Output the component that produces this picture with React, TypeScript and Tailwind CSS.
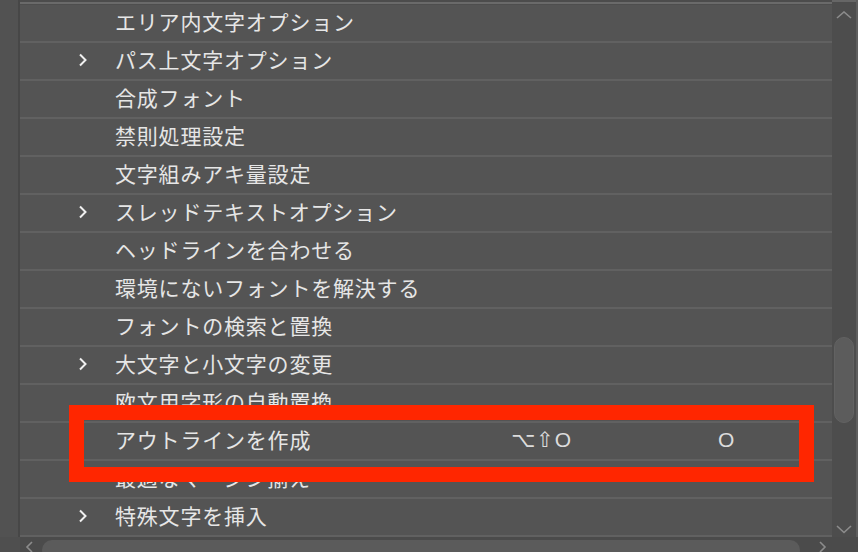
import React from "react";

type Row = { label: string; sub?: boolean; shortcut?: string; accel?: string };

const rows: Row[] = [
  { label: "エリア内文字オプション" },
  { label: "パス上文字オプション", sub: true },
  { label: "合成フォント" },
  { label: "禁則処理設定" },
  { label: "文字組みアキ量設定" },
  { label: "スレッドテキストオプション", sub: true },
  { label: "ヘッドラインを合わせる" },
  { label: "環境にないフォントを解決する" },
  { label: "フォントの検索と置換" },
  { label: "大文字と小文字の変更", sub: true },
  { label: "欧文用字形の自動置換" },
  { label: "アウトラインを作成", shortcut: "⌥⇧O", accel: "O" },
  { label: "最適なマージン揃え" },
  { label: "特殊文字を挿入", sub: true },
];

const Chevron = () => (
  <svg width="10" height="14" viewBox="0 0 10 14" fill="none">
    <path d="M2 1.5 L7.5 7 L2 12.5" stroke="#f0f0f0" strokeWidth="2" />
  </svg>
);

const MenuRow = ({ label, sub, shortcut, accel }: Row) => (
  <div className="h-[38px] shrink-0 flex items-center pl-[58px] pb-[2px] border-b-2 border-[#616161] bg-[#545454]">
    <div className="w-[37px] flex items-center">{sub && <Chevron />}</div>
    <div className="w-[396px] text-[21px] tracking-[0.8px] text-[#e6e6e6] whitespace-nowrap">{label}</div>
    {shortcut && (
      <>
        <div className="w-[207px] text-[21px] tracking-[1px] text-[#dcdcdc] whitespace-nowrap font-['Liberation_Sans','DejaVu_Sans',sans-serif]">
          {shortcut}
        </div>
        <div className="text-[21px] text-[#dcdcdc] font-['Liberation_Sans',sans-serif]">{accel}</div>
      </>
    )}
  </div>
);

export default function App() {
  return (
    <div className="relative w-[858px] h-[552px] overflow-hidden bg-[#535353] flex flex-col font-['Noto_Sans_CJK_JP','Noto_Sans',sans-serif]">
      <div className="flex flex-1 min-h-0">
        <div className="w-[18px] bg-[#525252]" />
        <div className="w-[2px] bg-[#474747]" />
        <div className="flex-1 flex flex-col overflow-hidden">
          <div className="h-[2px] shrink-0 bg-[#4c4c4c]" />
          <div className="h-[2px] shrink-0 bg-[#6a6a6a]" />
          <div className="h-[1px] shrink-0 bg-[#4e4e4e]" />
          {rows.map((r) => (
            <MenuRow key={r.label} {...r} />
          ))}
        </div>
        <div className="w-[24px] bg-[#4d4d4d] flex flex-col items-center relative">
          <div className="h-[2px] w-full bg-[#666666]" />
          <svg className="mt-[9px]" width="16" height="8" viewBox="0 0 16 8" fill="none">
            <path d="M1 7 L8 1 L15 7" stroke="#8c8c8c" strokeWidth="1.6" />
          </svg>
          <div className="mt-[318px] w-[20px] h-[86px] rounded-full bg-[#5c5c5c] border border-[#626262]" />
          <div className="flex-1" />
          <svg className="mb-[3px]" width="16" height="9" viewBox="0 0 16 9" fill="none">
            <path d="M1 1 L8 7.5 L15 1" stroke="#8c8c8c" strokeWidth="1.6" />
          </svg>
        </div>
        <div className="w-[2px] bg-[#5e5e5e]" />
      </div>
      <div className="h-[15px] shrink-0 flex bg-[#4b4b4b]">
        <div className="w-[20px] bg-[#4f4f4f]" />
        <div className="flex-1 flex items-start pt-[3px] relative">
          <svg className="ml-[5px] mt-[1px]" width="9" height="12" viewBox="0 0 9 12" fill="none">
            <path d="M7 1 L2 6 L7 11" stroke="#8c8c8c" strokeWidth="1.6" />
          </svg>
          <div className="ml-[8px] w-[758px] h-[20px] rounded-full bg-[#5b5b5b]" />
          <svg className="ml-[18px] mt-[1px]" width="9" height="12" viewBox="0 0 9 12" fill="none">
            <path d="M2 1 L7 6 L2 11" stroke="#8c8c8c" strokeWidth="1.6" />
          </svg>
        </div>
      </div>
      <div className="absolute left-[69px] top-[405px] w-[745px] h-[77px] border-[15px] border-[#ff2600]" />
    </div>
  );
}
